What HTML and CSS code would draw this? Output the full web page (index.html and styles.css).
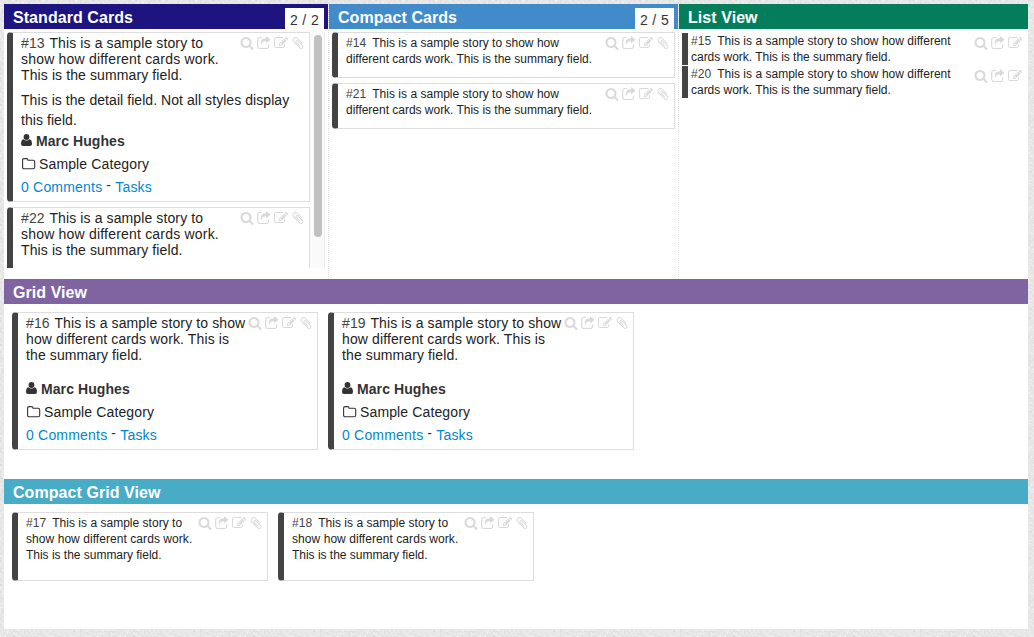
FILE: index.html
```html
<!DOCTYPE html>
<html lang="en">
<head>
<meta charset="utf-8">
<title>Card styles</title>
<link rel="stylesheet" href="styles.css">
</head>
<body>
<svg class="defs" aria-hidden="true">
  <symbol id="search" viewBox="0 0 1792 1792"><path fill="currentColor" d="M1216 832q0-185-131.5-316.500t-316.500-131.500-316.500 131.500-131.500 316.500 131.500 316.500 316.500 131.500 316.500-131.500 131.500-316.500zm512 832q0 52-38 90t-90 38q-54 0-90-38l-343-342q-179 124-399 124-143 0-273.500-55.500t-225-150-150-225-55.500-273.500 55.500-273.500 150-225 225-150 273.500-55.500 273.500 55.500 225 150 150 225 55.500 273.500q0 220-124 399l343 343q37 37 37 90z"/></symbol>
  <symbol id="share" viewBox="0 0 14 14"><path d="M5 1.500H3A2.300 2.300 0 0 0 .700 3.800v6.400A2.300 2.300 0 0 0 3 12.500h6.300a2.300 2.300 0 0 0 2.300-2.300V8.600" fill="none" stroke="currentColor" stroke-width="1.200"/><path d="M9 0l4.500 3.800L9 7.600V5.300C6.300 5.200 4.900 6.100 4.600 9.200 2.800 5.800 4.300 2.200 9 2.200z" fill="currentColor"/></symbol>
  <symbol id="edit" viewBox="0 0 1792 1792"><path fill="currentColor" d="M888 1184l116-116-152-152-116 116v56h96v96h56zm440-720q-16-16-33 1l-350 350q-17 17-1 33t33-1l350-350q17-17 1-33zm80 594v190q0 119-84.500 203.500t-203.500 84.500h-832q-119 0-203.500-84.500t-84.500-203.500v-832q0-119 84.500-203.500t203.500-84.500h832q63 0 117 25 15 7 18 23 3 17-9 29l-49 49q-14 14-32 8-23-6-45-6h-832q-66 0-113 47t-47 113v832q0 66 47 113t113 47h832q66 0 113-47t47-113v-126q0-13 9-22l64-64q15-15 35-7t20 29zm-96-738l288 288-672 672h-288v-288zm444 132l-92 92-288-288 92-92q28-28 68-28t68 28l152 152q28 28 28 68t-28 68z"/></symbol>
  <symbol id="clip" viewBox="0 0 1792 1792"><path fill="currentColor" d="M1596 1385q0 117-79 196t-196 79q-135 0-235-100l-777-776q-113-115-113-271 0-159 110-270t269-111q158 0 273 113l605 606q10 10 10 22 0 16-30.500 46.500t-46.500 30.500q-13 0-23-10l-606-607q-79-77-181-77-106 0-179 75t-73 181q0 105 76 181l776 777q63 63 145 63 64 0 106-42t42-106q0-82-63-145l-581-581q-26-24-60-24-29 0-48 19t-19 48q0 32 25 59l410 410q10 10 10 22 0 16-31 47t-47 31q-12 0-22-10l-410-410q-63-61-63-149 0-82 57-139t139-57q88 0 149 63l581 581q100 98 100 235z"/></symbol>
  <symbol id="user" viewBox="0 0 11 12"><circle cx="5.500" cy="3" r="2.900" fill="currentColor"/><path d="M2.400 5.200Q5.500 7.800 8.600 5.200 11 5.900 11 9.900 11 12 9 12H2Q0 12 0 9.900 0 5.900 2.400 5.200z" fill="currentColor"/></symbol>
  <symbol id="folder" viewBox="0 0 14 12"><path d="M.6 2.200Q.6.600 2.200.600h2.300Q6 .6 6 2.200h5.200q1.500 0 1.500 1.500v5.600q0 1.500-1.500 1.500H2.200Q.6 10.800.6 9.300z" fill="none" stroke="currentColor" stroke-width="1.100"/></symbol>
</svg>

<main class="board">
  <div class="columns">
    <section class="column column-standard">
      <header class="bar navy"><h2>Standard Cards</h2><span class="count">2 / 2</span></header>
      <div class="scroller">
        <div class="stack">
          <article class="card standard">
            <p class="summary"><span class="id">#13</span> This is a sample story to<br><span class="wide">show how different cards work.</span><br>This is the summary field.</p>
            <p class="detail">This is the detail field. Not all styles display<br>this field.</p>
            <div class="meta"><div class="row"><svg class="user"><use href="#user"/></svg><b>Marc Hughes</b></div><div class="row"><svg class="folder"><use href="#folder"/></svg>Sample Category</div><div class="row links"><a>0 Comments</a><i>-</i><a>Tasks</a></div></div>
            <div class="tools"><svg><use href="#search"/></svg><svg><use href="#share"/></svg><svg><use href="#edit"/></svg><svg><use href="#clip"/></svg></div>
          </article>
          <article class="card standard">
            <p class="summary"><span class="id">#22</span> This is a sample story to<br><span class="wide">show how different cards work.</span><br>This is the summary field.</p>
            <div class="tools"><svg><use href="#search"/></svg><svg><use href="#share"/></svg><svg><use href="#edit"/></svg><svg><use href="#clip"/></svg></div>
          </article>
        </div>
        <div class="track"><div class="thumb"></div></div>
      </div>
    </section>

    <section class="column column-compact">
      <header class="bar blue"><h2>Compact Cards</h2><span class="count">2 / 5</span></header>
      <div class="stack">
        <article class="card compact">
          <p class="summary"><span class="id">#14</span> This is a sample story to show how<br><span class="tight">different cards work. This is the summary field.</span></p>
          <div class="tools"><svg><use href="#search"/></svg><svg><use href="#share"/></svg><svg><use href="#edit"/></svg><svg><use href="#clip"/></svg></div>
        </article>
        <article class="card compact">
          <p class="summary"><span class="id">#21</span> This is a sample story to show how<br><span class="tight">different cards work. This is the summary field.</span></p>
          <div class="tools"><svg><use href="#search"/></svg><svg><use href="#share"/></svg><svg><use href="#edit"/></svg><svg><use href="#clip"/></svg></div>
        </article>
      </div>
    </section>

    <section class="column column-list">
      <header class="bar green"><h2>List View</h2></header>
      <div class="list">
        <article class="item">
          <p class="summary"><span class="id">#15</span> This is a sample story to show how different<br><span class="tight">cards work. This is the summary field.</span></p>
          <div class="tools"><svg><use href="#search"/></svg><svg><use href="#share"/></svg><svg><use href="#edit"/></svg></div>
        </article>
        <article class="item">
          <p class="summary"><span class="id">#20</span> This is a sample story to show how different<br><span class="tight">cards work. This is the summary field.</span></p>
          <div class="tools"><svg><use href="#search"/></svg><svg><use href="#share"/></svg><svg><use href="#edit"/></svg></div>
        </article>
      </div>
    </section>
  </div>

  <section class="grid-section">
    <header class="bar purple"><h2>Grid View</h2></header>
    <div class="grid">
      <article class="card standard large">
        <p class="summary"><span class="id">#16</span> This is a sample story to show<br>how different cards work. This is<br>the summary field.</p>
        <div class="meta"><div class="row"><svg class="user"><use href="#user"/></svg><b>Marc Hughes</b></div><div class="row"><svg class="folder"><use href="#folder"/></svg>Sample Category</div><div class="row links"><a>0 Comments</a><i>-</i><a>Tasks</a></div></div>
        <div class="tools"><svg><use href="#search"/></svg><svg><use href="#share"/></svg><svg><use href="#edit"/></svg><svg><use href="#clip"/></svg></div>
      </article>
      <article class="card standard large">
        <p class="summary"><span class="id">#19</span> This is a sample story to show<br>how different cards work. This is<br>the summary field.</p>
        <div class="meta"><div class="row"><svg class="user"><use href="#user"/></svg><b>Marc Hughes</b></div><div class="row"><svg class="folder"><use href="#folder"/></svg>Sample Category</div><div class="row links"><a>0 Comments</a><i>-</i><a>Tasks</a></div></div>
        <div class="tools"><svg><use href="#search"/></svg><svg><use href="#share"/></svg><svg><use href="#edit"/></svg><svg><use href="#clip"/></svg></div>
      </article>
    </div>
  </section>

  <section class="grid-section last">
    <header class="bar teal"><h2>Compact Grid View</h2></header>
    <div class="grid">
      <article class="card compact small">
        <p class="summary"><span class="id">#17</span> This is a sample story to<br><span class="wide">show how different cards work.</span><br><span class="tight">This is the summary field.</span></p>
        <div class="tools"><svg><use href="#search"/></svg><svg><use href="#share"/></svg><svg><use href="#edit"/></svg><svg><use href="#clip"/></svg></div>
      </article>
      <article class="card compact small">
        <p class="summary"><span class="id">#18</span> This is a sample story to<br><span class="wide">show how different cards work.</span><br><span class="tight">This is the summary field.</span></p>
        <div class="tools"><svg><use href="#search"/></svg><svg><use href="#share"/></svg><svg><use href="#edit"/></svg><svg><use href="#clip"/></svg></div>
      </article>
    </div>
  </section>
</main>
</body>
</html>
```
FILE: styles.css
```css
* { box-sizing: border-box; }
body {
  margin: 0;
  padding: 4px 6px 8px 4px;
  height: 637px;
  overflow: hidden;
  background: #e8e8e8 url("data:image/svg+xml,%3Csvg xmlns='http://www.w3.org/2000/svg' width='120' height='120'%3E%3Cfilter id='n' x='0' y='0' width='1' height='1' color-interpolation-filters='sRGB'%3E%3CfeTurbulence type='fractalNoise' baseFrequency='.45' numOctaves='2' stitchTiles='stitch'/%3E%3CfeColorMatrix values='.14 0 0 0 .835 .14 0 0 0 .835 .14 0 0 0 .835 0 0 0 0 1'/%3E%3C/filter%3E%3Crect width='120' height='120' filter='url(%23n)'/%3E%3C/svg%3E");
  font: 14px/20px "Liberation Sans", Arial, sans-serif;
  color: #333;
}
.defs { display: none; }
h2, p { margin: 0; }
.board { height: 625px; background: #fff; }
.columns { display: grid; grid-template-columns: 325px 350px 349px; height: 275px; }
.column { min-width: 0; }
.column-standard, .column-compact { border-right: 1px dotted #ddd; }

.bar { display: flex; justify-content: space-between; height: 25px; padding-left: 9px; color: #fff; }
.bar h2 { font-size: 16px; line-height: 27px; font-weight: bold; letter-spacing: .06px; white-space: nowrap; }
.navy { background: #1d1480; }
.blue { background: #428bca; }
.green { background: #047e5a; }
.purple { background: #8064a2; }
.teal { background: #48acc6; }
.count { width: 39px; height: 21px; margin: 4px 4px 0 0; background: #fff; color: #333; font-size: 14px; line-height: 24px; letter-spacing: .4px; text-align: center; white-space: nowrap; }
.column-standard .count { margin-right: 4px; }

.scroller { display: flex; width: 318px; height: 236px; margin: 3px 0 0 3px; overflow: hidden; }
.scroller .stack { width: 303px; margin: 0; }
.track { width: 15px; height: 236px; padding: 3px 3px 0 4px; background: #fafafa; border-right: 1px solid #ececec; }
.thumb { width: 8px; height: 202px; border-radius: 4px; background: #c1c1c1; }

.stack { display: flex; flex-direction: column; gap: 5px; margin: 3px 3px 0 3px; }
.card {
  position: relative;
  flex: none;
  border: 1px solid #ddd;
  border-left: 6px solid #444;
  border-radius: 4px 0 0 4px;
  padding: 2px 0 0 8px;
  background: #fff;
  white-space: nowrap;
}
.scroller .card { height: 170px; }
.compact { height: 46px; }
.summary { line-height: 16px; letter-spacing: .11px; color: #222; }
.standard .wide { letter-spacing: .2px; }
.id { margin-right: 1px; color: #444; }
.compact .summary, .item .summary { font-size: 12px; letter-spacing: .02px; }
.compact .wide { letter-spacing: .06px; }
.tight { letter-spacing: -.02px; }
.compact .id, .item .id { margin-right: 3px; }
.detail { margin-top: 7px; letter-spacing: .06px; color: #222; }
.scroller .meta { margin-top: -1px; }
.row { display: flex; align-items: center; height: 23px; letter-spacing: .13px; color: #222; }
.row b { color: #333; letter-spacing: .08px; }
.user { width: 11px; height: 12px; margin: 0 4px 2px 0; color: #333; }
.folder { width: 14px; height: 12px; margin: 0 3px 0 1px; color: #333; }
.links { color: #08c; letter-spacing: .2px; }
.links i { margin: 0 4px 3px 4px; font-style: normal; color: #333; }
.tools { position: absolute; top: 3px; right: 4px; display: flex; gap: 3px; color: #d9d9d9; }
.tools svg { width: 14px; height: 14px; }

.list { display: flex; flex-direction: column; gap: 1px; margin: 4px 0 0 3px; }
.item { position: relative; height: 32px; padding-left: 3px; border-left: 6px solid #444; white-space: nowrap; }
.item .tools { right: 6px; }

.grid-section { height: 200px; }
.last { height: 150px; }
.grid { display: flex; gap: 10px; padding: 8px; }
.large { width: 306px; height: 138px; }
.large .meta { margin-top: 14px; }
.small { width: 256px; height: 69px; }
```
